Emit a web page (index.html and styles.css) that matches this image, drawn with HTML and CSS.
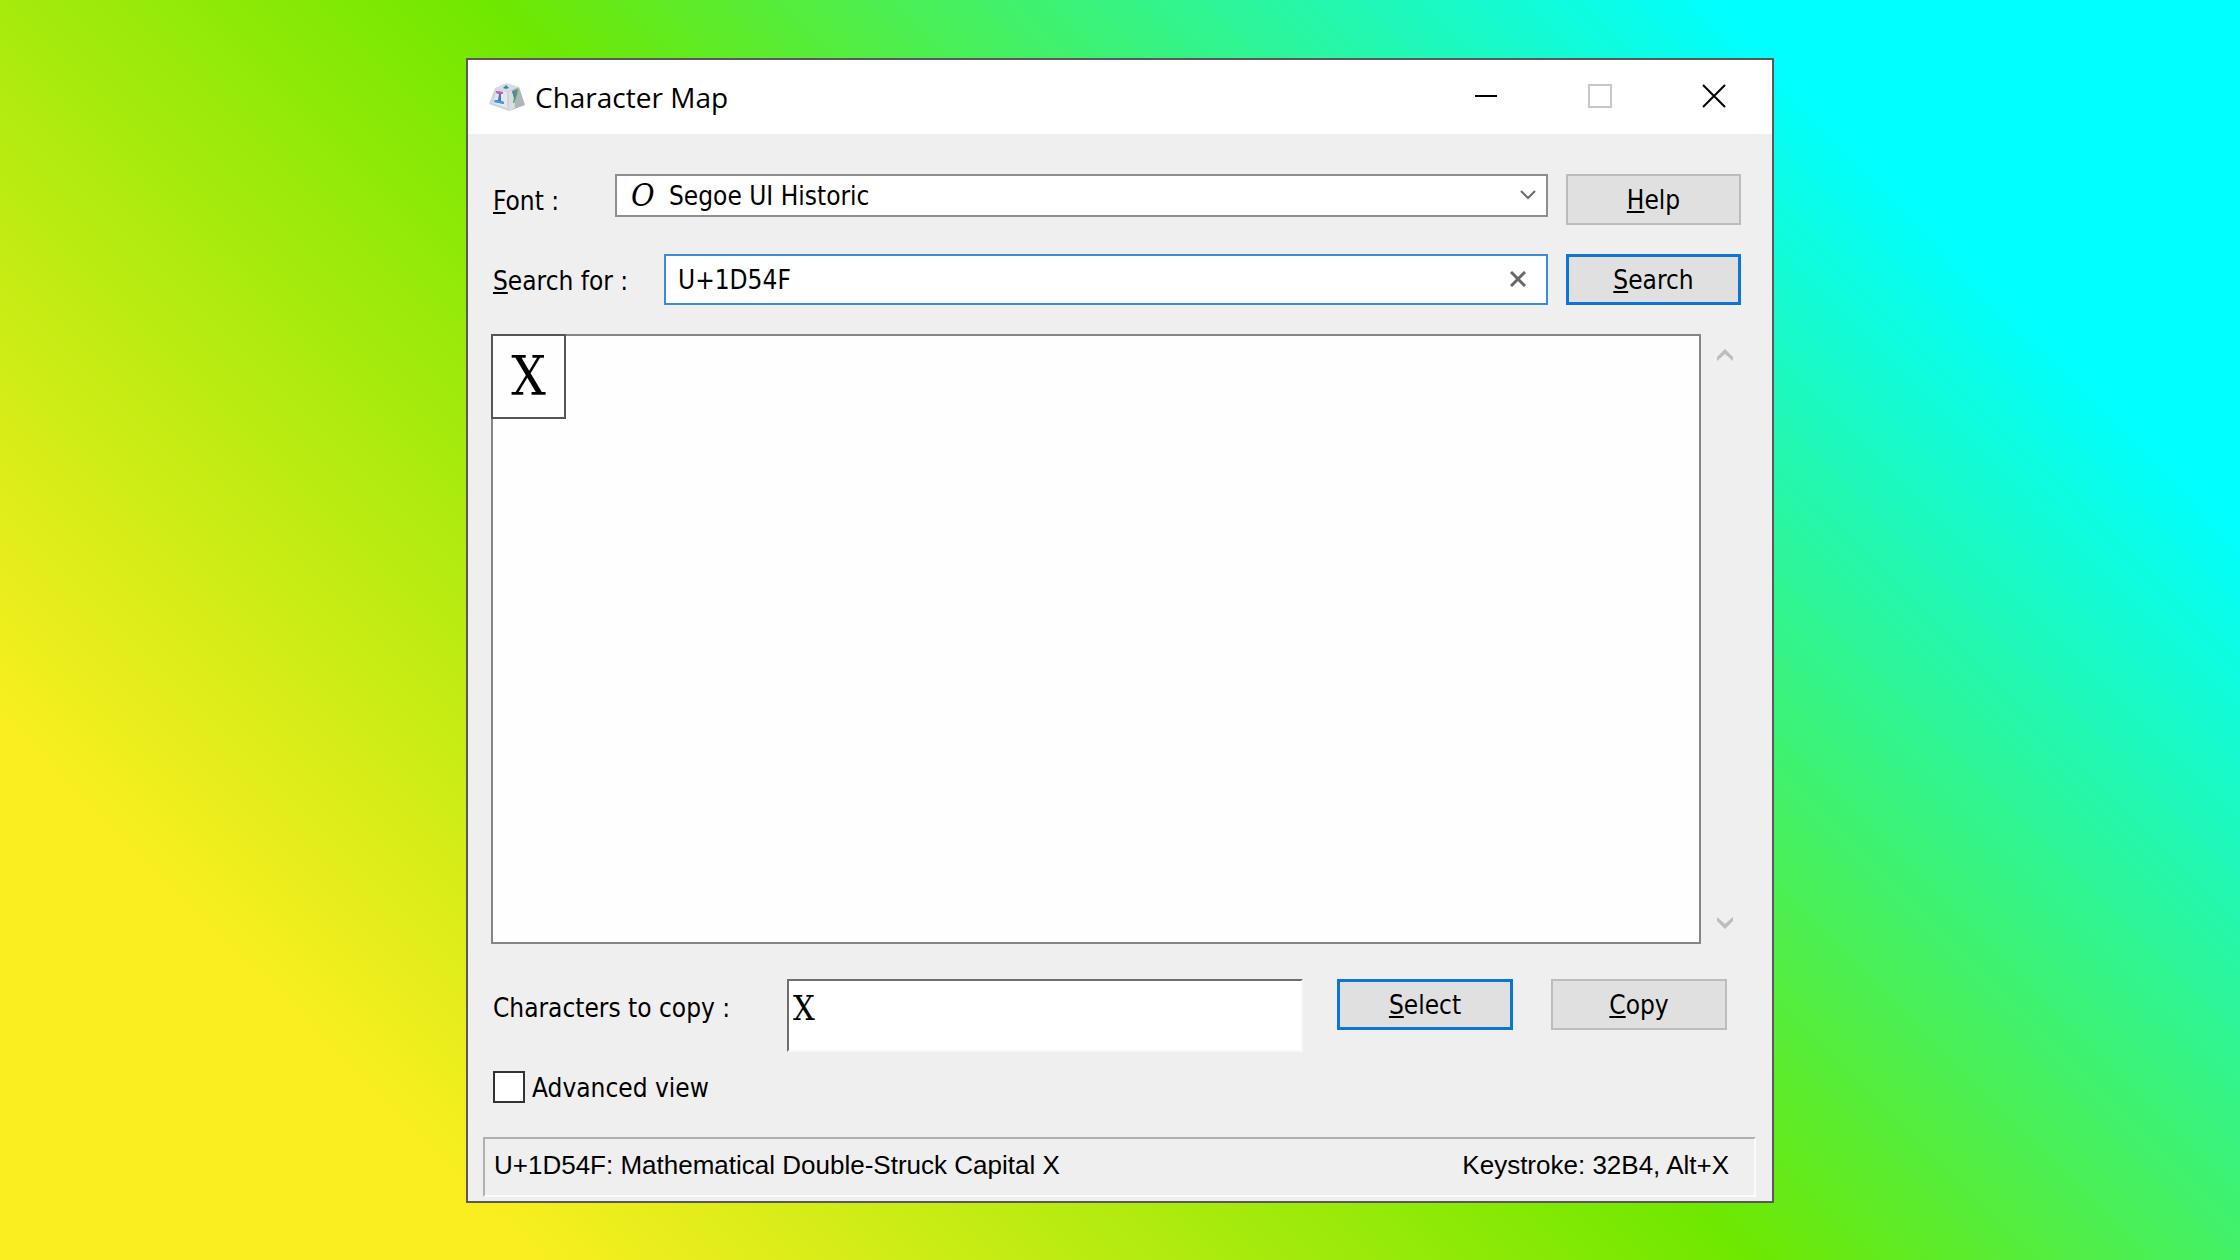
FILE: index.html
```html
<!DOCTYPE html>
<html lang="en">
<head>
<meta charset="utf-8">
<meta name="viewport" content="width=device-width, initial-scale=1">
<title>Character Map</title>
<link rel="stylesheet" href="styles.css">
</head>
<body>
<main class="window">
  <header class="titlebar">
    <svg class="app-icon" viewBox="0 0 36 28" aria-hidden="true">
      <path d="M6 5 17 0 30 4 20 9Z" fill="#d9dde3"/>
      <path d="M6 5 20 8 20 28 0 21Z" fill="#cfd4dc"/>
      <path d="M8 7 18 9 18 25 4 20Z" fill="#e4e8ee"/>
      <path d="M20 8 30 4 36 22 20 28Z" fill="#b0b5bc"/>
      <path d="M20 8 25 7 26 25 20 28Z" fill="#dadee2"/>
      <path d="M7 8 14 9 14 11 12 11 12 18 15 19 15 21 5 19 6 17 9 17 10 11 7 10Z" fill="#4a72d2"/>
      <path d="M7 8 14 9 14 11 7 10Z" fill="#d45ac0"/>
      <path d="M6 17 15 19 15 21 5 19Z" fill="#37a4dc"/>
      <path d="M14 5 17 2 20 5 17 6Z" fill="#2d8f9c"/>
      <path d="M23 8 29 6 28 12 25 20 24 20 25 14Z" fill="#45a366"/>
      <path d="M23 8 25 8 26 13 25 15Z" fill="#5a76c4"/>
    </svg>
    <h1 class="title">Character Map</h1>
    <button class="caption" type="button" aria-label="Minimize">
      <svg viewBox="0 0 24 24" aria-hidden="true"><path d="M1 12H23" stroke="#000" stroke-width="2"/></svg>
    </button>
    <button class="caption" type="button" aria-label="Maximize" disabled>
      <svg viewBox="0 0 24 24" aria-hidden="true"><path d="M1 1H23V23H1Z" fill="none" stroke="#c8c8c8" stroke-width="2"/></svg>
    </button>
    <button class="caption" type="button" aria-label="Close">
      <svg viewBox="0 0 24 24" aria-hidden="true"><path d="M1 1 23 23M23 1 1 23" stroke="#000" stroke-width="2"/></svg>
    </button>
  </header>

  <form class="content">
    <div class="row">
      <label class="label label-font" for="font"><u>F</u>ont :</label>
      <div class="combo">
        <span class="font-kind" aria-hidden="true">O</span>
        <select id="font" class="combo-select"><option>Segoe UI Historic</option></select>
        <svg class="chevron" viewBox="0 0 16 10" aria-hidden="true"><path d="M1 1 8 8 15 1" fill="none" stroke="#6b6b6b" stroke-width="2"/></svg>
      </div>
      <button class="button" type="button"><span><u>H</u>elp</span></button>
    </div>

    <div class="row">
      <label class="label label-search" for="search"><u>S</u>earch for :</label>
      <div class="search">
        <input id="search" class="search-input" type="text" value="U+1D54F">
        <button class="clear" type="button" aria-label="Clear search">
          <svg viewBox="0 0 16 16" aria-hidden="true"><path d="M1 1 15 15M15 1 1 15" stroke="#686868" stroke-width="3"/></svg>
        </button>
      </div>
      <button class="button button-default" type="button"><span><u>S</u>earch</span></button>
    </div>

    <div class="map">
      <div class="glyphs">
        <button class="glyph" type="button">X</button>
      </div>
      <div class="scroll">
        <svg viewBox="0 0 16 12" aria-hidden="true"><path d="M0 8 8 0 16 8V12L8 5 0 12Z" fill="#bdbdbd"/></svg>
        <svg viewBox="0 0 16 12" aria-hidden="true"><path d="M0 4 8 12 16 4V0L8 7 0 0Z" fill="#bdbdbd"/></svg>
      </div>
    </div>

    <div class="copy-row">
      <label class="label label-copy" for="copy">Characters to copy :</label>
      <input id="copy" class="copy-input" type="text" value="X">
      <div class="copy-actions">
        <button class="button button-default" type="button"><span><u>S</u>elect</span></button>
        <button class="button" type="button"><span><u>C</u>opy</span></button>
      </div>
    </div>

    <label class="check"><input class="check-box" type="checkbox"><span class="check-text">Advanced view</span></label>
  </form>

  <footer class="status">
    <span>U+1D54F: Mathematical Double-Struck Capital X</span>
    <span>Keystroke: 32B4, Alt+X</span>
  </footer>
</main>
</body>
</html>
```

FILE: styles.css
```css
* {
  box-sizing: border-box;
}

body {
  margin: 0;
  min-height: 100vh;
  display: flex;
  align-items: center;
  justify-content: center;
  background: linear-gradient(45deg, #fbee20 15%, #6fe800 50%, #00ffff 85%);
  color: #000;
  font: 26px/32px "DejaVu Sans Condensed", "DejaVu Sans", sans-serif;
}

button,
input,
select {
  margin: 0;
  padding: 0;
  border: 0;
  border-radius: 0;
  background: none;
  color: inherit;
  font: inherit;
  appearance: none;
  outline: none;
}

svg {
  display: block;
}

u {
  text-decoration-thickness: 2px;
  text-underline-offset: 2px;
  text-decoration-skip-ink: none;
}

.window {
  width: 100%;
  max-width: 1308px;
  border: 2px solid #5a585c;
  background: #efefef;
}

.titlebar {
  display: flex;
  align-items: center;
  height: 74px;
  padding-left: 21px;
  background: #fff;
}

.app-icon {
  width: 36px;
  height: 28px;
}

.title {
  flex: 1;
  margin: 0;
  padding-left: 10px;
  font: 28px/40px "Open Sans", "Noto Sans", sans-serif;
}

.caption {
  display: flex;
  align-items: center;
  justify-content: center;
  width: 114px;
  height: 74px;
  padding: 0 2px 2px 0;
}

.caption svg {
  width: 24px;
  height: 24px;
}

.content {
  padding: 40px 31px 34px 23px;
}

.row {
  display: flex;
  align-items: flex-start;
  margin-bottom: 29px;
}

.label {
  flex: none;
  padding: 11px 0 0 2px;
}

.label-font {
  width: 124px;
}

.label-search {
  width: 173px;
}

.label-copy {
  width: 296px;
  padding-top: 13px;
}

.combo,
.search {
  display: flex;
  flex: 1;
  align-items: center;
  margin-right: 18px;
  background: #fff;
}

.combo {
  height: 43px;
  padding: 0 10px 0 14px;
  border: 2px solid #8e8e8e;
}

.font-kind {
  width: 38px;
  font: italic 32px/38px "DejaVu Serif Condensed", "DejaVu Serif", serif;
}

.combo-select {
  flex: 1;
  padding-top: 2px;
}

.chevron {
  width: 16px;
  height: 10px;
}

.search {
  height: 51px;
  padding: 0 20px 0 12px;
  border: 2px solid #3a8bdc;
}

.search-input {
  flex: 1;
  padding-top: 2px;
}

.clear svg {
  width: 16px;
  height: 16px;
}

.button {
  width: 175px;
  height: 51px;
  padding-top: 2px;
  border: 2px solid #bcbcbc;
  background: #e0e0e0;
}

.button-default {
  border: 3px solid #0b76d8;
}

.map {
  display: flex;
  min-height: 610px;
}

.glyphs {
  flex: 1;
  border: 2px solid #82868a;
  background: #fefefe;
}

.glyph {
  width: 75px;
  height: 85px;
  margin: -2px 0 0 -2px;
  padding-top: 2px;
  border: 2px solid #555;
  font: 54px/78px "DejaVu Serif Condensed", "DejaVu Serif", serif;
}

.scroll {
  display: flex;
  flex-direction: column;
  justify-content: space-between;
  padding: 15px 8px 15px 16px;
}

.scroll svg {
  width: 16px;
  height: 12px;
}

.copy-row {
  display: flex;
  align-items: flex-start;
  margin: 35px 14px 19px 0;
}

.copy-input {
  flex: 1;
  min-width: 0;
  height: 73px;
  padding: 0 0 15px 4px;
  border: 2px solid;
  border-color: #6e6e6e #f8f8f8 #f8f8f8 #6e6e6e;
  background: #fff;
  font: 34px/40px "DejaVu Serif Condensed", "DejaVu Serif", serif;
}

.copy-actions {
  display: flex;
  gap: 38px;
  margin-left: 34px;
}

.copy-actions .button {
  width: 176px;
}

.check {
  display: inline-flex;
  align-items: center;
  gap: 7px;
  padding-left: 2px;
  vertical-align: top;
}

.check-box {
  width: 32px;
  height: 32px;
  border: 2px solid #333;
  background: #fff;
}

.check-text {
  padding-top: 2px;
  line-height: 30px;
}

.status {
  display: flex;
  align-items: center;
  justify-content: space-between;
  height: 60px;
  margin: 0 16px 4px 15px;
  padding: 0 25px 4px 9px;
  border: 2px solid;
  border-color: #b0b0b0 #fbfbfb #fbfbfb #b0b0b0;
  font: 26px/32px "Liberation Sans", Arial, sans-serif;
}
```
